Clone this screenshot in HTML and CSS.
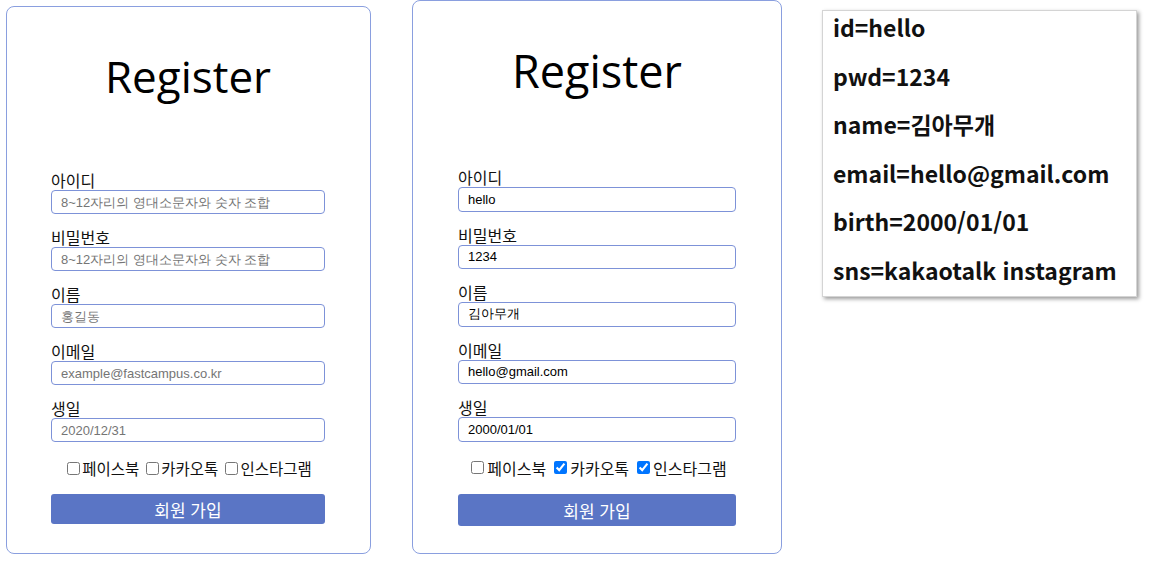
FILE: index.html
```html
<!DOCTYPE html>
<html lang="ko">
<head>
  <meta charset="UTF-8" />
  <meta name="viewport" content="width=device-width, initial-scale=1.0" />
  <title>Register</title>
  <link rel="stylesheet" href="styles.css">
</head>
<body>

  <div class="board">
    <!-- Empty form -->
    <form class="register">
      <h1>Register</h1>
      <div class="fields">
        <div class="field">
          <label for="id1">아이디</label>
          <input type="text" id="id1" placeholder="8~12자리의 영대소문자와 숫자 조합">
        </div>
        <div class="field">
          <label for="pwd1">비밀번호</label>
          <input type="text" id="pwd1" placeholder="8~12자리의 영대소문자와 숫자 조합">
        </div>
        <div class="field">
          <label for="name1">이름</label>
          <input type="text" id="name1" placeholder="홍길동">
        </div>
        <div class="field">
          <label for="email1">이메일</label>
          <input type="text" id="email1" placeholder="example@fastcampus.co.kr">
        </div>
        <div class="field">
          <label for="birth1">생일</label>
          <input type="text" id="birth1" placeholder="2020/12/31">
        </div>
      </div>
      <div class="sns">
        <label><input type="checkbox">페이스북</label>
        <label><input type="checkbox">카카오톡</label>
        <label><input type="checkbox">인스타그램</label>
      </div>
      <button type="button">회원 가입</button>
    </form>

    <!-- Filled form -->
    <form class="register register-filled">
      <h1>Register</h1>
      <div class="fields">
        <div class="field">
          <label for="id2">아이디</label>
          <input type="text" id="id2" value="hello">
        </div>
        <div class="field">
          <label for="pwd2">비밀번호</label>
          <input type="text" id="pwd2" value="1234">
        </div>
        <div class="field">
          <label for="name2">이름</label>
          <input type="text" id="name2" value="김아무개">
        </div>
        <div class="field">
          <label for="email2">이메일</label>
          <input type="text" id="email2" value="hello@gmail.com">
        </div>
        <div class="field">
          <label for="birth2">생일</label>
          <input type="text" id="birth2" value="2000/01/01">
        </div>
      </div>
      <div class="sns">
        <label><input type="checkbox">페이스북</label>
        <label><input type="checkbox" checked>카카오톡</label>
        <label><input type="checkbox" checked>인스타그램</label>
      </div>
      <button type="button">회원 가입</button>
    </form>

    <!-- Submitted result -->
    <div class="result">
      <p>id=hello</p>
      <p>pwd=1234</p>
      <p>name=김아무개</p>
      <p>email=hello@gmail.com</p>
      <p>birth=2000/01/01</p>
      <p>sns=kakaotalk instagram</p>
    </div>
  </div>

</body>
</html>
```

FILE: styles.css
```css
body {
  margin: 0;
  padding: 0;
  background-color: white;
  font-family: "Noto Sans CJK KR", sans-serif;
  color: #111;
}

.board {
  display: flex;
  align-items: flex-start;
  padding-left: 6px;
}

.register {
  box-sizing: border-box;
  width: 365px;
  margin-top: 6px;
  padding: 0 45px 29px 44px;
  border: 1px solid #8a9fdf;
  border-radius: 8px;
}

.register h1 {
  margin: 39px 0 0;
  font-family: "Open Sans", sans-serif;
  font-size: 44px;
  font-weight: 400;
  line-height: 60px;
  text-align: center;
  color: black;
}

.fields {
  margin-top: 64px;
}

.field {
  margin-bottom: 13px;
}

.field label {
  display: block;
  font-size: 16px;
  line-height: 20px;
}

.field input {
  box-sizing: border-box;
  display: block;
  width: 100%;
  height: 24px;
  margin: 0;
  padding: 0 9px;
  border: 1px solid #7d92d8;
  border-radius: 4px;
  font-family: "Liberation Sans", Arial, sans-serif;
  font-size: 13px;
  color: black;
  outline: none;
}

.field input::placeholder {
  color: #757575;
}

.sns {
  margin-top: 14px;
  height: 24px;
  display: flex;
  justify-content: center;
  align-items: center;
  gap: 4px;
  font-size: 15.5px;
}

.sns label {
  display: flex;
  align-items: center;
}

.sns input {
  width: 13px;
  height: 13px;
  margin: 0 2px 0 3px;
}

.register button {
  display: block;
  width: 100%;
  height: 30px;
  margin-top: 14px;
  border: none;
  border-radius: 3px;
  background-color: #5a75c5;
  color: white;
  font-family: "Noto Sans CJK KR", sans-serif;
  font-size: 17px;
  cursor: pointer;
}

/* second screenshot is a touch bigger */
.register-filled {
  width: 370px;
  margin: 0 0 0 41px;
  padding: 0 45px 27px 45px;
}

.register-filled h1 {
  margin-top: 39.5px;
  font-size: 45px;
}

.register-filled .fields {
  margin-top: 66.5px;
}

.register-filled .field input {
  height: 24.5px;
}

.register-filled .sns {
  font-size: 16px;
}

.register-filled .sns input {
  margin: 0 3px 0 4px;
}

.register-filled button {
  height: 32px;
  margin-top: 14.5px;
}

.result {
  box-sizing: border-box;
  width: 315px;
  height: 287px;
  margin: 10px 0 0 40px;
  padding: 1px 10px 0;
  border: 1px solid #d4d4d4;
  box-shadow: 2px 2px 4px rgba(0, 0, 0, 0.4);
  font-size: 23px;
  font-weight: 700;
  color: #111;
}

.result p {
  margin: 0 0 18.5px;
  line-height: 30px;
  white-space: nowrap;
}
```
